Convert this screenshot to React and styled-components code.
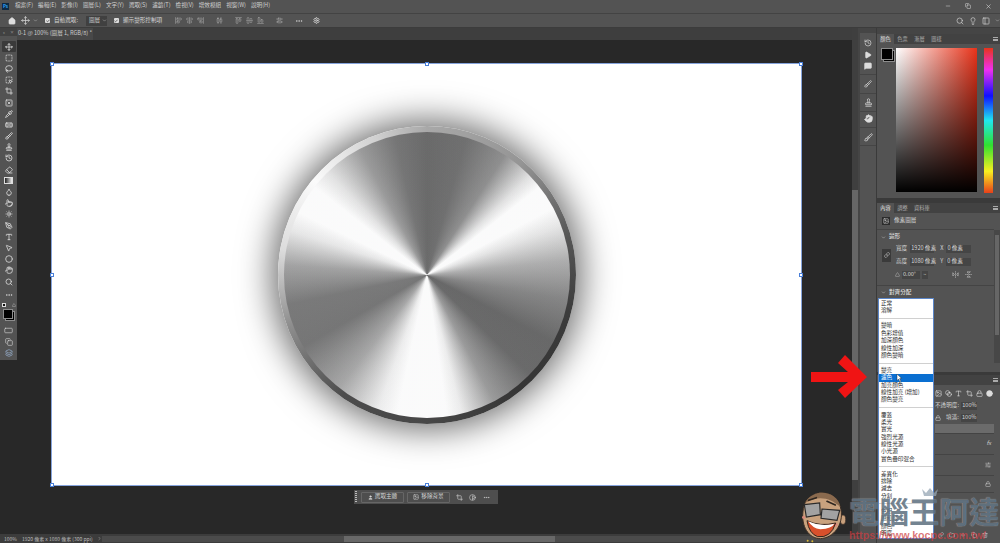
import styled, { createGlobalStyle } from "styled-components";
import {
  AlignCenterHorizontal, AlignCenterVertical, AlignEndHorizontal, AlignEndVertical,
  AlignHorizontalDistributeCenter, AlignStartHorizontal, AlignStartVertical,
  AlignVerticalDistributeCenter, Bandage, Brush, Check, ChevronDown, ChevronRight, Circle,
  Copy, Crop, Droplet, Ellipsis, Eraser, FlipHorizontal2, FlipVertical2, Folder, Hand,
  History, House, Image, Lasso, Lightbulb, Link, Lock, MessageSquare, Minus, Move,
  PanelLeft, PenTool, Pipette, Play, Plus, Pointer, Search, Settings,
  SlidersHorizontal, SquareDashed, SquareDashedMousePointer, SquareX, Stamp, SunMedium,
  Trash2, Type, User, X, MousePointer2, RectangleHorizontal, Layers, Triangle, Contrast,
  Blend,
} from "lucide-react";

const Global = createGlobalStyle`
  html, body { margin: 0; padding: 0; background: #282828; overflow: hidden; }
  * { box-sizing: border-box; }
  body { font-family: "Noto Sans CJK TC", "Noto Sans", sans-serif; }
`;

const Window = styled.div`
  position: relative;
  width: 1000px;
  height: 543px;
  overflow: hidden;
  display: flex;
  flex-direction: column;
  background: #535353;
  color: #d6d6d6;
  font-size: 5.6px;
  line-height: 1;
`;

const MenuBar = styled.div`
  height: 13px;
  display: flex;
  align-items: center;
  padding: 0 7px 1px 2px;
  background: #535353;
`;

const PsLogo = styled.div`
  width: 7px;
  height: 7px;
  margin-right: 6px;
  background: #0f2a44;
  color: #31a8ff;
  font-size: 4.5px;
  font-weight: 700;
  text-align: center;
  line-height: 7px;
`;

const MenuItems = styled.div`
  display: flex;
  gap: 5px;
  flex: 1;
  color: #cfcfcf;
  span { white-space: nowrap; }
`;

const WindowButtons = styled.div`
  display: flex;
  gap: 14px;
  align-items: center;
  color: #d8d8d8;
  margin-right: 1px;
`;

const OptionsBar = styled.div`
  height: 15px;
  display: flex;
  align-items: center;
  padding-left: 8px;
  background: #535353;
  border-top: 1px solid #434343;
  border-bottom: 1px solid #3c3c3c;
`;

const OptGroup = styled.div`
  display: flex;
  align-items: center;
  gap: ${(p) => p.$gap || 4}px;
  margin-left: ${(p) => p.$left || 0}px;
  color: ${(p) => (p.$dim ? "#a8a8a8" : "#d4d4d4")};
`;

const DistributeGap = styled.span`
  width: 4px;
`;

const CheckBox = styled.span`
  width: 5px;
  height: 5px;
  border-radius: 1px;
  background: #dcdcdc;
  color: #333;
  display: inline-flex;
  align-items: center;
  justify-content: center;
`;

const SelectBox = styled.div`
  width: 21px;
  height: 10px;
  padding-left: 3px;
  background: #404040;
  display: flex;
  align-items: center;
  justify-content: space-between;
  color: #cfcfcf;
`;

const Spacer = styled.div`
  flex: 1;
`;

const Body = styled.div`
  flex: 1;
  display: flex;
  min-height: 0;
`;

const Main = styled.div`
  flex: 1;
  display: flex;
  flex-direction: column;
  min-width: 0;
`;

const MainRow = styled.div`
  flex: 1;
  display: flex;
  min-height: 0;
  background: #282828;
`;

const ToolColumn = styled.div`
  width: 17px;
  display: flex;
  flex-direction: column;
  background: #282828;
`;

const ToolGrip = styled.div`
  height: 8px;
  background: #424242;
  display: flex;
  align-items: center;
  justify-content: space-between;
  padding: 0 3px;
  color: #aaa;
  font-size: 4px;
`;

const ToolBar = styled.div`
  height: 324px;
  background: #535353;
  display: flex;
  flex-direction: column;
  padding-top: 5px;
  align-items: center;
  color: #dcdcdc;
`;

const ToolBtn = styled.div`
  width: 14px;
  height: 11.2px;
  flex: none;
  margin-top: ${(p) => p.$top || 0}px;
  display: flex;
  align-items: center;
  justify-content: center;
  border-radius: 1px;
  background: ${(p) => (p.$active ? "#3a3a3a" : "transparent")};
`;

const GradientIcon = styled.span`
  width: 9px;
  height: 7px;
  border: 1px solid #ddd;
  background: linear-gradient(to right, #222, #eee);
`;

const MiniRow = styled.div`
  width: 14px;
  height: 7px;
  margin-top: 1px;
  display: flex;
  align-items: center;
  justify-content: space-between;
`;

const MiniSwatch = styled.span`
  width: 4px;
  height: 4px;
  background: #111;
  border: 1px solid #ddd;
`;

const Swatches = styled.div`
  position: relative;
  width: ${(p) => p.$size}px;
  height: ${(p) => p.$size}px;
  flex: none;
  margin-top: ${(p) => p.$top || 0}px;
  margin-bottom: ${(p) => p.$bottom || 0}px;
  &::before, &::after {
    content: "";
    position: absolute;
    width: ${(p) => p.$chip}px;
    height: ${(p) => p.$chip}px;
    background: #000;
    border: 1px solid #8c8c8c;
  }
  &::after { left: 0; top: 0; }
  &::before { right: 0; bottom: 0; }
`;

const DocColumn = styled.div`
  flex: 1;
  display: flex;
  flex-direction: column;
  min-width: 0;
`;

const TabRow = styled.div`
  height: 12px;
  background: #3e3e3e;
  display: flex;
  flex: none;
`;

const DocTab = styled.div`
  width: 76px;
  background: #484848;
  display: flex;
  align-items: center;
  justify-content: space-between;
  padding: 0 3px 0 1px;
  color: #cdcdcd;
  white-space: nowrap;
`;

const CanvasArea = styled.div`
  flex: 1;
  padding: 24px 0 0 35px;
  background: #282828;
`;

const Sheet = styled.div`
  position: relative;
  width: 749px;
  height: 421px;
  background: #fff;
  outline: 1px solid #86a4dc;
  display: flex;
  align-items: center;
  justify-content: center;
`;

const Handle = styled.span`
  position: absolute;
  width: 4px;
  height: 4px;
  margin: -2px 0 0 -2px;
  background: #fff;
  border: 1px solid #4a7fd8;
  left: ${(p) => p.$x}%;
  top: ${(p) => p.$y}%;
`;

const Disc = styled.div`
  width: 298px;
  height: 298px;
  border-radius: 50%;
  padding: 6px;
  background: conic-gradient(#a8a8a8 0deg, #959595 40deg, #555 75deg, #3c3c3c 105deg,
    #353535 140deg, #474747 180deg, #4c4c4c 215deg, #8e8e8e 250deg, #dcdcdc 280deg, #fbfbfb 310deg, #cfcfcf 340deg, #a8a8a8 360deg);
  box-shadow: 0 0 34px 6px rgba(0, 0, 0, 0.58);
`;

const DiscFace = styled.div`
  width: 100%;
  height: 100%;
  border-radius: 50%;
  background:
    repeating-radial-gradient(circle, rgba(120, 90, 130, 0.03) 0 1px, rgba(90, 130, 110, 0.03) 1px 2px),
    conic-gradient(#6a6a6a 0deg, #707070 16deg, #909090 33deg, #e4e4e4 46deg, #fff 52deg, #fff 62deg, #e8e8e8 70deg, #b0b0b0 84deg, #868686 100deg,
      #686868 118deg, #6a6a6a 134deg, #9c9c9c 152deg, #f0f0f0 166deg, #fff 172deg, #fff 192deg, #f0f0f0 200deg, #a8a8a8 218deg,
      #767676 240deg, #7a7a7a 258deg, #a4a4a4 274deg, #eaeaea 288deg, #fff 296deg, #fff 308deg, #e6e6e6 316deg, #9c9c9c 332deg, #767676 347deg, #6a6a6a 360deg);
`;

const ContextBar = styled.div`
  width: 144px;
  height: 14px;
  margin: 5px 0 0 302px;
  padding: 0 5px 0 1px;
  display: flex;
  align-items: center;
  background: #4e4e4e;
  color: #d2d2d2;
`;

const Grip = styled.span`
  width: 2px;
  height: 12px;
  margin-right: 4px;
  background: repeating-linear-gradient(to bottom, #bbb 0 1px, transparent 1px 2px);
`;

const ContextBtn = styled.div`
  width: 43px;
  height: 11px;
  margin-right: 3px;
  border: 1px solid #666;
  border-radius: 1px;
  display: flex;
  align-items: center;
  justify-content: center;
  gap: 2px;
`;

const ContextIcons = styled.div`
  flex: 1;
  display: flex;
  justify-content: space-around;
  align-items: center;
`;

const VScroll = styled.div`
  width: 8px;
  border-right: 2px solid #454545;
  background: #3f3f3f;
  display: flex;
  flex-direction: column;
  padding-top: 162px;
`;

const VThumb = styled.div`
  height: 290px;
  background: #666;
`;

const StatusBar = styled.div`
  height: 9px;
  flex: none;
  display: flex;
  align-items: center;
  background: #3c3c3c;
  color: #bcbcbc;
  font-size: 5px;
`;

const StatusText = styled.div`
  width: ${(p) => p.$w}px;
  flex: none;
  padding-left: ${(p) => p.$pad}px;
  white-space: nowrap;
`;

const HScroll = styled.div`
  flex: 1;
  height: 6px;
  padding-left: 242px;
  background: #4b4b4b;
`;

const HThumb = styled.div`
  width: 211px;
  height: 100%;
  background: #686868;
`;

const Dock = styled.div`
  width: 140px;
  flex: none;
  display: flex;
  background: #3a3a3a;
`;

const IconColumn = styled.div`
  width: 16px;
  margin-right: 1px;
  background: #535353;
  display: flex;
  flex-direction: column;
  color: #dcdcdc;
`;

const IconHead = styled.div`
  height: 5px;
  background: #454545;
`;

const IconGroup = styled.div`
  display: flex;
  flex-direction: column;
  align-items: center;
  gap: 3.5px;
  padding: ${(p) => p.$top}px 0 ${(p) => p.$bottom}px;
  border-bottom: 1px solid #454545;
`;

const PanelColumn = styled.div`
  flex: 1;
  display: flex;
  flex-direction: column;
  min-width: 0;
`;

const PanelHead = styled.div`
  height: 6px;
  background: #454545;
`;

const Panel = styled.div`
  height: ${(p) => p.$h}px;
  flex: none;
  margin-bottom: ${(p) => p.$gap || 0}px;
  background: #535353;
  display: flex;
  flex-direction: column;
`;

const TabStrip = styled.div`
  height: 10px;
  flex: none;
  display: flex;
  align-items: stretch;
  background: #424242;
  color: #b4b4b4;
`;

const PanelTab = styled.div`
  min-width: 17px;
  padding: 0 3px;
  display: flex;
  align-items: center;
  justify-content: center;
  white-space: nowrap;
  font-size: 5.2px;
  background: ${(p) => (p.$active ? "#535353" : "transparent")};
  color: ${(p) => (p.$active ? "#e4e4e4" : "#b0b0b0")};
`;

const TabMenu = styled.div`
  margin-left: auto;
  width: 5px;
  height: 4px;
  align-self: center;
  margin-right: 2px;
  background: repeating-linear-gradient(to bottom, #aaa 0 1px, transparent 1px 1.5px);
`;

const ColorBody = styled.div`
  flex: 1;
  display: flex;
  padding: 4px 7px 6px 4px;
`;

const ColorField = styled.div`
  width: 81px;
  height: 144px;
  margin-left: 1px;
  background:
    linear-gradient(to top, #000, rgba(0, 0, 0, 0)),
    linear-gradient(to right, #fff, #e8331a);
`;

const HueStrip = styled.div`
  width: 9px;
  height: 145px;
  margin-left: 7px;
  background: linear-gradient(to bottom, #e8331a 0%, #f030f0 15%, #1010ff 33%, #20e8f0 50%, #30e030 67%, #f8f020 85%, #e8401a 100%);
`;

const PropsBody = styled.div`
  flex: 1;
  display: flex;
  min-height: 0;
`;

const PropsContent = styled.div`
  flex: 1;
  display: flex;
  flex-direction: column;
`;

const PanelScroll = styled.div`
  width: 6px;
  margin-top: 17px;
  height: 133px;
  background: #474747;
  padding-top: 5px;
`;

const PanelThumb = styled.div`
  height: 100px;
  margin: 0 1px;
  background: #666;
`;

const LayerTitleRow = styled.div`
  height: 17px;
  display: flex;
  align-items: center;
  gap: 4px;
  padding-left: 5px;
  border-bottom: 1px solid #444;
`;

const ThumbIcon = styled.span`
  width: 8px;
  height: 8px;
  background: #2c2c2c;
  display: inline-flex;
  align-items: center;
  justify-content: center;
  color: #ddd;
`;

const SectionHead = styled.div`
  display: flex;
  align-items: center;
  gap: 3px;
  height: 8px;
  margin-top: ${(p) => p.$top}px;
  padding-left: 4px;
  font-weight: 500;
  color: #dedede;
`;

const TransformWrap = styled.div`
  display: flex;
  align-items: center;
  padding: 4px 0 0 5px;
`;

const LinkChip = styled.span`
  width: 9px;
  height: 13px;
  background: #3a3a3a;
  display: inline-flex;
  align-items: center;
  justify-content: center;
  margin-right: 5px;
  color: #ddd;
`;

const FieldRows = styled.div`
  display: flex;
  flex-direction: column;
  gap: 4.6px;
`;

const FieldRow = styled.div`
  display: flex;
  align-items: center;
  gap: 3px;
  height: 8px;
`;

const Field = styled.span`
  width: ${(p) => p.$w}px;
  height: 8px;
  padding-left: 1px;
  background: #454545;
  display: inline-flex;
  align-items: center;
  color: #d8d8d8;
  white-space: nowrap;
`;

const AxisLabel = styled.span`
  margin-left: 3px;
`;

const AngleRow = styled.div`
  display: flex;
  align-items: center;
  gap: 2px;
  height: 8px;
  margin-top: 5px;
  padding-left: 18px;
  color: #ccc;
`;

const FlipSlot = styled.span`
  display: inline-flex;
  margin-left: ${(p) => p.$left}px;
`;

const Divider = styled.div`
  height: 1px;
  margin-top: ${(p) => p.$top}px;
  background: #444;
`;

const LayerRows = styled.div`
  flex: 1;
  display: flex;
  flex-direction: column;
  padding: 3px 7px 0 58px;
`;

const IconRow = styled.div`
  display: flex;
  gap: 3px;
  height: 10px;
  align-items: center;
  color: #ddd;
  svg { flex: none; width: 7px; height: 7px; }
  justify-content: space-between;
`;

const OpacityRow = styled.div`
  display: flex;
  align-items: center;
  gap: 1px;
  height: 9px;
  margin-top: 3px;
  color: #d2d2d2;
  white-space: nowrap;
  justify-content: flex-end;
  padding-right: 16px;
`;

const LockSlot = styled.span`
  display: inline-flex;
  margin-right: 4px;
`;

const LayerLine = styled.div`
  height: ${(p) => p.$h}px;
  flex: none;
  margin-top: ${(p) => p.$top || 0}px;
  margin-right: -1px;
  background: ${(p) => (p.$active ? "#6b6b6b" : "transparent")};
  border-bottom: 1px solid #444;
  display: flex;
  align-items: center;
  justify-content: flex-end;
  padding-right: 3px;
  color: #ccc;
  font-style: italic;
`;

const LayerFooter = styled.div`
  margin-top: auto;
  height: 11px;
  padding: 0 12px 3px 0;
  display: flex;
  justify-content: flex-end;
  gap: 5px;
  color: #ccc;
`;

/* the blend mode menu, the arrow and the watermark lie over the page */
const BlendMenu = styled.div`
  position: absolute;
  left: 878px;
  top: 298px;
  width: 56px;
  height: 241px;
  background: #fff;
  border: 1px solid #5b86c9;
  color: #2a2a2a;
  padding-top: 1px;
  z-index: 2;
`;

const BlendItem = styled.div`
  height: 7.35px;
  padding-left: 2px;
  line-height: 7.35px;
  white-space: nowrap;
  position: relative;
  background: ${(p) => (p.$selected ? "#0a6fd1" : "transparent")};
  color: ${(p) => (p.$selected ? "#fff" : "#2a2a2a")};
`;

const BlendSep = styled.div`
  height: 7.8px;
  display: flex;
  align-items: center;
  &::after {
    content: "";
    flex: 1;
    height: 1px;
    background: #d0d0d0;
  }
`;

const Cursor = styled.svg`
  position: absolute;
  left: 17px;
  top: 0;
  width: 6px;
  height: 8px;
`;

const RedArrow = styled.svg`
  position: absolute;
  left: 811px;
  top: 355px;
  width: 56px;
  height: 44px;
  z-index: 3;
`;

const Mascot = styled.svg`
  position: absolute;
  left: 797px;
  top: 488px;
  width: 50px;
  height: 55px;
  z-index: 3;
`;

const MarkText = styled.div`
  position: absolute;
  left: 849px;
  top: 492px;
  font-size: 30px;
  line-height: 36px;
  font-weight: 700;
  color: rgba(62, 84, 102, 0.72);
  text-shadow: 0 0 1px rgba(255, 255, 255, 0.6);
  white-space: nowrap;
  z-index: 3;
`;

const MarkCrown = styled.svg`
  position: absolute;
  left: 921px;
  top: 487px;
  width: 18px;
  height: 10px;
  z-index: 3;
`;

const MarkUrl = styled.div`
  position: absolute;
  left: 849px;
  top: 528px;
  font-family: "Liberation Sans", sans-serif;
  font-size: 10.7px;
  line-height: 14px;
  font-weight: 700;
  color: rgba(206, 62, 66, 0.72);
  white-space: nowrap;
  z-index: 3;
`;

const menus = ["檔案(F)", "編輯(E)", "影像(I)", "圖層(L)", "文字(Y)", "選取(S)", "濾鏡(T)", "檢視(V)", "增效模組", "視窗(W)", "說明(H)"];

const tools = [
  Move, SquareDashed, Lasso, SquareDashedMousePointer, Crop, SquareX, Pipette, Bandage, Brush, Stamp,
  History, Eraser, null, Droplet, Pointer, SunMedium, PenTool, Type, MousePointer2, Circle, Hand, Search,
];

const blendGroups = [
  ["正常", "溶解"],
  ["變暗", "色彩增值", "加深顏色", "線性加深", "顏色變暗"],
  ["變亮", "濾色", "加亮顏色", "線性加亮 (增加)", "顏色變亮"],
  ["覆蓋", "柔光", "實光", "強烈光源", "線性光源", "小光源", "實色疊印混合"],
  ["差異化", "排除", "減去", "分割"],
  ["色相", "飽和度", "顏色", "明度"],
];

const handles = [[0, 0], [50, 0], [100, 0], [0, 50], [100, 50], [0, 100], [50, 100], [100, 100]];

function Options() {
  return (
    <OptionsBar>
      <House size={8} fill="#ddd" color="#ddd" />
      <OptGroup $left={5} $gap={3}>
        <Move size={9} />
        <ChevronDown size={5} />
      </OptGroup>
      <OptGroup $left={7}>
        <CheckBox><Check size={4} strokeWidth={4} /></CheckBox>
        <span>自動選取:</span>
      </OptGroup>
      <OptGroup $left={8}>
        <SelectBox>圖層<ChevronDown size={5} /></SelectBox>
      </OptGroup>
      <OptGroup $left={7}>
        <CheckBox><Check size={4} strokeWidth={4} /></CheckBox>
        <span>顯示變形控制項</span>
      </OptGroup>
      <OptGroup $left={13} $dim>
        <AlignStartVertical size={7} />
        <AlignCenterVertical size={7} />
        <AlignEndVertical size={7} />
        <DistributeGap />
        <AlignHorizontalDistributeCenter size={7} />
      </OptGroup>
      <OptGroup $left={12} $dim>
        <AlignStartHorizontal size={7} />
        <AlignCenterHorizontal size={7} />
        <AlignEndHorizontal size={7} />
        <DistributeGap />
        <AlignVerticalDistributeCenter size={7} />
      </OptGroup>
      <OptGroup $left={12}><Ellipsis size={8} /></OptGroup>
      <OptGroup $left={10}><Settings size={7} strokeWidth={3} /></OptGroup>
      <Spacer />
      <OptGroup $gap={5}>
        <Search size={8} />
        <Lightbulb size={8} />
        <PanelLeft size={8} />
        <ChevronDown size={5} />
      </OptGroup>
    </OptionsBar>
  );
}

function Tools() {
  return (
    <ToolColumn>
      <ToolGrip><span>«</span><span>×</span></ToolGrip>
      <ToolBar>
        {tools.map((Icon, i) => (
          <ToolBtn key={i} $active={i === 0}>
            {Icon ? <Icon size={8} strokeWidth={2.4} /> : <GradientIcon />}
          </ToolBtn>
        ))}
        <ToolBtn $top={2}><Ellipsis size={8} /></ToolBtn>
        <MiniRow><MiniSwatch /><Triangle size={4} /></MiniRow>
        <Swatches $size={12} $chip={8} $top={1} $bottom={4} />
        <ToolBtn><RectangleHorizontal size={9} strokeWidth={1.6} /></ToolBtn>
        <ToolBtn><Copy size={8} strokeWidth={1.8} /></ToolBtn>
        <ToolBtn><Layers size={8} color="#9db6d6" /></ToolBtn>
      </ToolBar>
    </ToolColumn>
  );
}

function CanvasPane() {
  return (
    <DocColumn>
      <TabRow>
        <DocTab>
          <span>0-1 @ 100% (圖層 1, RGB/8) *</span>
          <X size={4} />
        </DocTab>
      </TabRow>
      <CanvasArea>
        <Sheet>
          <Disc><DiscFace /></Disc>
          {handles.map(([x, y]) => <Handle key={`${x}-${y}`} $x={x} $y={y} />)}
        </Sheet>
        <ContextBar>
          <Grip />
          <ContextBtn><User size={5} fill="#ddd" />選取主體</ContextBtn>
          <ContextBtn><Image size={6} />移除背景</ContextBtn>
          <ContextIcons>
            <Crop size={7} />
            <Contrast size={7} />
            <Ellipsis size={7} />
          </ContextIcons>
        </ContextBar>
      </CanvasArea>
    </DocColumn>
  );
}

function Panels() {
  return (
    <Dock>
      <IconColumn>
        <IconHead />
        <IconGroup $top={6} $bottom={4}>
          <History size={8} />
          <Play size={8} fill="#ddd" />
          <MessageSquare size={8} fill="#ddd" />
        </IconGroup>
        <IconGroup $top={5} $bottom={5}><Brush size={8} /></IconGroup>
        <IconGroup $top={4} $bottom={4}><Stamp size={9} /></IconGroup>
        <IconGroup $top={2} $bottom={4}><Hand size={9} fill="#ddd" /></IconGroup>
        <IconGroup $top={5} $bottom={3}><Brush size={9} /></IconGroup>
      </IconColumn>
      <PanelColumn>
        <PanelHead />
        <Panel $h={164} $gap={5}>
          <TabStrip>
            <PanelTab $active>顏色</PanelTab>
            <PanelTab>色票</PanelTab>
            <PanelTab>漸層</PanelTab>
            <PanelTab>圖樣</PanelTab>
            <TabMenu />
          </TabStrip>
          <ColorBody>
            <Swatches $size={14} $chip={10} />
            <ColorField />
            <HueStrip />
          </ColorBody>
        </Panel>
        <Panel $h={169} $gap={3}>
          <TabStrip>
            <PanelTab $active>內容</PanelTab>
            <PanelTab>調整</PanelTab>
            <PanelTab>資料庫</PanelTab>
            <TabMenu />
          </TabStrip>
          <PropsBody>
            <PropsContent>
              <LayerTitleRow>
                <ThumbIcon><Image size={6} /></ThumbIcon>
                <span>像素圖層</span>
              </LayerTitleRow>
              <SectionHead $top={3}><ChevronDown size={5} />變形</SectionHead>
              <TransformWrap>
                <LinkChip><Link size={6} /></LinkChip>
                <FieldRows>
                  <FieldRow>寬度<Field $w={24}>1920 像素</Field><AxisLabel>X</AxisLabel><Field $w={25}>0 像素</Field></FieldRow>
                  <FieldRow>高度<Field $w={24}>1080 像素</Field><AxisLabel>Y</AxisLabel><Field $w={25}>0 像素</Field></FieldRow>
                </FieldRows>
              </TransformWrap>
              <AngleRow>
                <Triangle size={5} />
                <Field $w={18}>0.00°</Field>
                <Field $w={6}>~</Field>
                <FlipSlot $left={22}><FlipHorizontal2 size={7} /></FlipSlot>
                <FlipSlot $left={4}><FlipVertical2 size={7} /></FlipSlot>
              </AngleRow>
              <Divider $top={6} />
              <SectionHead $top={3}><ChevronDown size={5} />對齊分配</SectionHead>
            </PropsContent>
            <PanelScroll><PanelThumb /></PanelScroll>
          </PropsBody>
        </Panel>
        <Panel $h={168}>
          <TabStrip>
            <PanelTab $active>圖層</PanelTab>
            <PanelTab>色版</PanelTab>
            <PanelTab>路徑</PanelTab>
            <TabMenu />
          </TabStrip>
          <LayerRows>
            <IconRow>
              <Image /><Blend /><Type /><Crop /><Lock /><Circle fill="#ddd" />
            </IconRow>
            <OpacityRow>不透明度:&nbsp;<Field $w={17}>100%</Field></OpacityRow>
            <OpacityRow><LockSlot><Lock size={6} /></LockSlot>填滿:&nbsp;<Field $w={17}>100%</Field></OpacityRow>
            <LayerLine $h={10} $active $top={2} />
            <LayerLine $h={21}>fx</LayerLine>
            <LayerLine $h={21}><SlidersHorizontal size={6} /></LayerLine>
            <LayerLine $h={17}><Lock size={6} /></LayerLine>
          </LayerRows>
          <LayerFooter>
            <Link size={6} /><Folder size={6} /><Plus size={6} /><Copy size={6} /><Trash2 size={6} />
          </LayerFooter>
        </Panel>
      </PanelColumn>
    </Dock>
  );
}

function BlendList() {
  return (
    <BlendMenu>
      {blendGroups.map((group, g) => (
        <div key={g}>
          {g > 0 && <BlendSep />}
          {group.map((name) => (
            <BlendItem key={name} $selected={name === "濾色"}>
              {name}
              {name === "濾色" && (
                <Cursor viewBox="0 0 6 8">
                  <path d="M1 0 L1 6.5 L2.5 5 L4 8 L5 7.4 L3.6 4.6 L5.6 4.4 Z" fill="#fff" stroke="#222" strokeWidth="0.4" />
                </Cursor>
              )}
            </BlendItem>
          ))}
        </div>
      ))}
    </BlendMenu>
  );
}

function Watermark() {
  return (
    <>
      <Mascot viewBox="50 55 150 165">
        <ellipse cx="188" cy="150" rx="8" ry="14" fill="#c8a07c" stroke="#3b2e25" strokeWidth="2" />
        <path d="M100 75 C130 60 175 75 182 120 C190 165 160 205 120 207 C85 207 62 170 68 125 C70 100 80 85 100 75 Z" fill="#c9a27e" stroke="#3b2e25" strokeWidth="3" />
        <path d="M100 75 C130 60 175 75 180 112 C150 85 115 75 74 100 C78 90 88 80 100 75 Z" fill="#8a6a4e" />
        <path d="M85 92 L108 84 M140 95 L165 106" stroke="#2e2620" strokeWidth="5" strokeLinecap="round" />
        <path d="M72 105 L118 100 L120 135 L78 142 Z M125 118 L178 122 L170 152 L122 146 Z" fill="#a2a2a2" stroke="#2b2b2b" strokeWidth="3.5" />
        <circle cx="70" cy="143" r="5" fill="#d98a7a" />
        <circle cx="166" cy="165" r="6" fill="#d98a7a" />
        <path d="M80 153 Q120 172 166 160 Q152 206 112 201 Q86 192 80 153 Z" fill="#d8502c" stroke="#33261f" strokeWidth="3" />
        <path d="M84 155 Q120 172 162 162 Q155 176 120 179 Q96 176 84 155 Z" fill="#fff" />
        <circle cx="82" cy="213" r="3" fill="#d8b83a" />
        <circle cx="96" cy="215" r="3" fill="#d8b83a" />
      </Mascot>
      <MarkCrown viewBox="0 0 18 10">
        <path d="M1 2 L5 6 L9 1 L13 6 L17 2 L15 9 L3 9 Z" fill="rgba(150,165,180,0.75)" />
      </MarkCrown>
      <MarkText>電腦王阿達</MarkText>
      <MarkUrl>https://www.kocpc.com.tw/</MarkUrl>
    </>
  );
}

export default function App() {
  return (
    <Window>
      <Global />
      <MenuBar>
        <PsLogo>Ps</PsLogo>
        <MenuItems>
          {menus.map((m) => <span key={m}>{m}</span>)}
        </MenuItems>
        <WindowButtons>
          <Minus size={6} />
          <Copy size={6} />
          <X size={7} />
        </WindowButtons>
      </MenuBar>
      <Options />
      <Body>
        <Main>
          <MainRow>
            <Tools />
            <CanvasPane />
            <VScroll><VThumb /></VScroll>
          </MainRow>
          <StatusBar>
            <StatusText $w={22} $pad={4}>100%</StatusText>
            <StatusText $w={75} $pad={0}>1920 像素 x 1080 像素 (300 ppi)</StatusText>
            <ChevronRight size={5} />
            <HScroll><HThumb /></HScroll>
          </StatusBar>
        </Main>
        <Panels />
      </Body>
      <BlendList />
      <RedArrow viewBox="0 0 56 44">
        <path d="M0 17 L37 17 L27 8 L34 0 L56 22 L34 43 L27 35 L37 27 L0 27 Z" fill="#f01414" />
      </RedArrow>
      <Watermark />
    </Window>
  );
}
